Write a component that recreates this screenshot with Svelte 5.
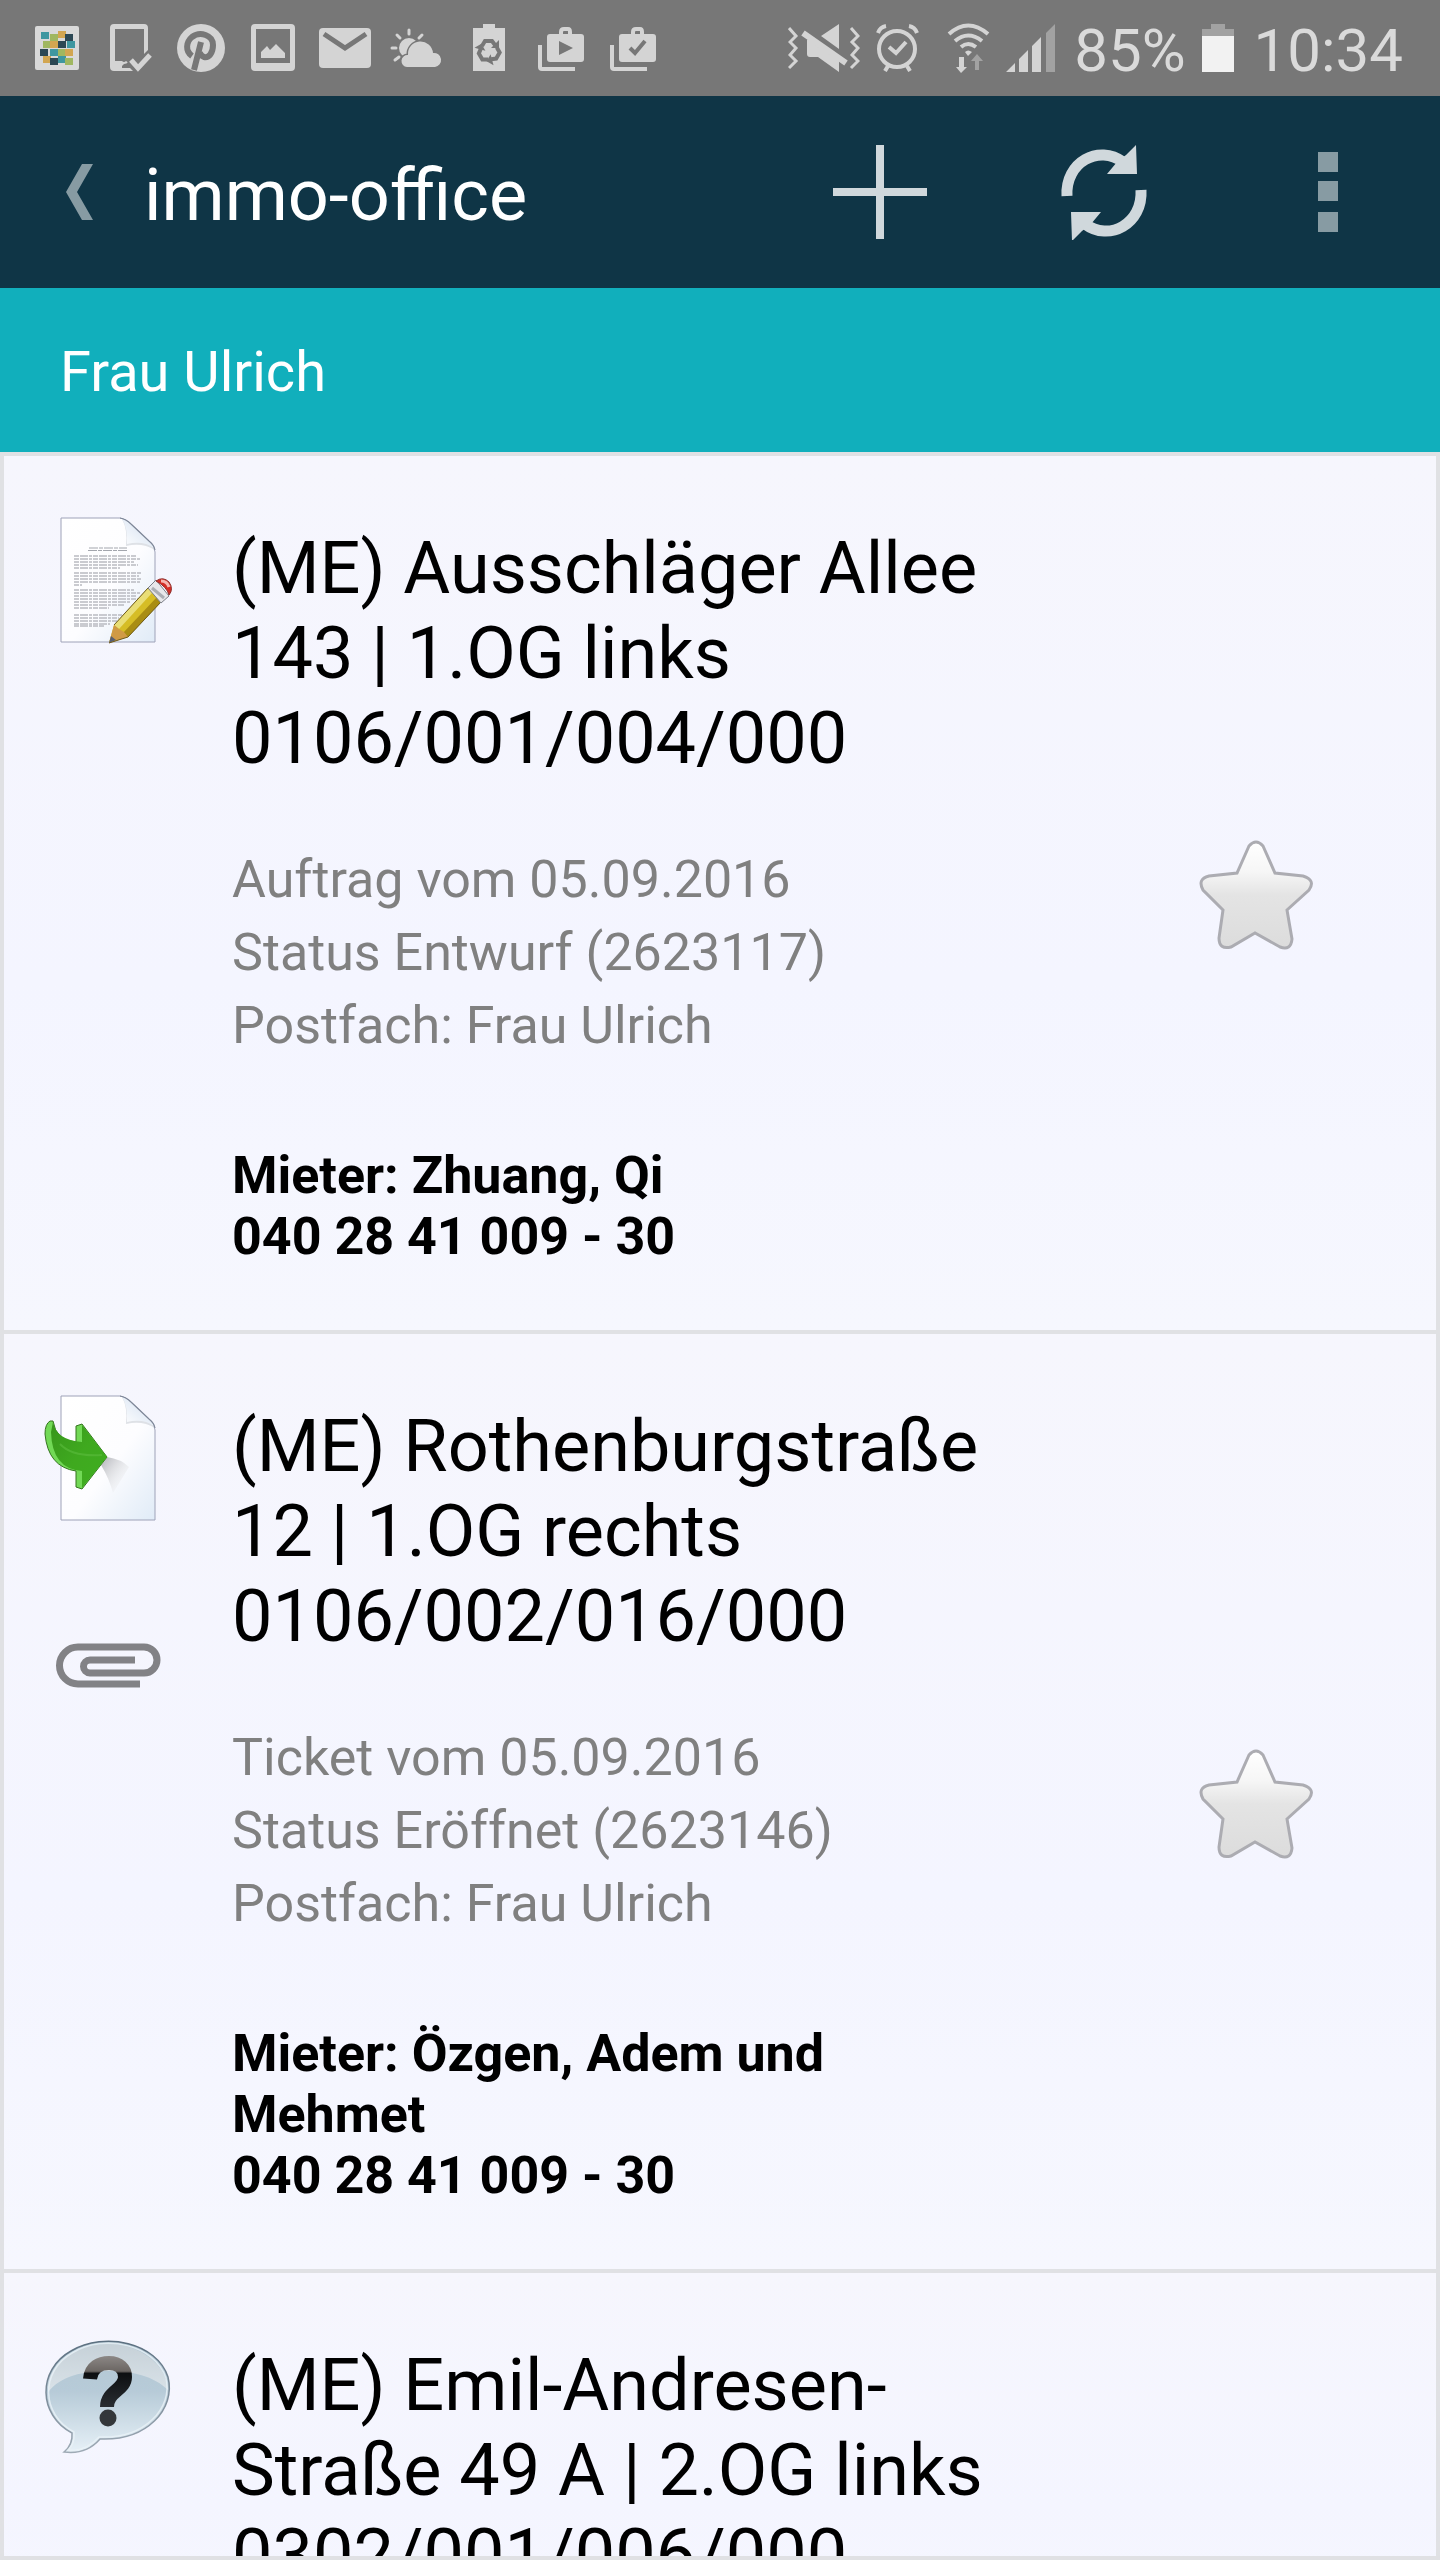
<script>
  let items = $state([
    {
      icon: 'draft', attachment: false, starred: false,
      address: '(ME) Ausschläger Allee 143 | 1.OG links', code: '0106/001/004/000',
      meta: ['Auftrag vom 05.09.2016', 'Status Entwurf (2623117)', 'Postfach: Frau Ulrich'],
      tenant: 'Mieter: Zhuang, Qi', phone: '040 28 41 009 - 30'
    },
    {
      icon: 'incoming', attachment: true, starred: false,
      address: '(ME) Rothenburgstraße 12 | 1.OG rechts', code: '0106/002/016/000',
      meta: ['Ticket vom 05.09.2016', 'Status Eröffnet (2623146)', 'Postfach: Frau Ulrich'],
      tenant: 'Mieter: Özgen, Adem und Mehmet', phone: '040 28 41 009 - 30'
    },
    {
      icon: 'question', attachment: false, starred: false,
      address: '(ME) Emil-Andresen-Straße 49 A | 2.OG links', code: '0302/001/006/000',
      meta: [], tenant: '', phone: ''
    }
  ]);

  const tiles = [
    [20, 8, '#3f97a0'], [29, 10, '#a0b760'], [37, 7, '#d2a651'], [44, 10, '#2c4854'],
    [22, 17, '#a0b760'], [29, 17, '#d2a651'], [37, 17, '#2c4854'], [46, 17, '#3f97a0'],
    [19, 25, '#2c4854'], [29, 25, '#3f97a0'], [37, 25, '#a0b760'], [44, 25, '#d2a651'],
    [22, 32, '#d2a651'], [29, 34, '#2c4854'], [37, 32, '#3f97a0'], [44, 34, '#a0b760']
  ];

  const lines = [
    [30, 40, 62], [30, 43, 66], [30, 46, 60], [30, 49, 64], [30, 52, 46],
    [30, 57, 67], [30, 60, 65], [30, 63, 67], [30, 66, 66], [30, 69, 8],
    [30, 74, 60], [30, 77, 66], [30, 80, 63], [30, 83, 67], [30, 86, 56], [30, 89, 50], [30, 92, 35],
    [30, 99, 48], [30, 102, 45], [30, 105, 43], [30, 108, 36], [30, 110, 30]
  ];
</script>

{#snippet sheet()}
  <path d="M17 2H76Q82 3 87 8L105 25Q111 30 111 36V126H17Z" fill="url(#paper)" stroke="#9ea2b8" stroke-width="1" />
  <path d="M78 3Q84 14 82 30Q98 26 111 34Q110 29 105 25L87 8Q83 4 78 3Z" fill="#c9ced6" opacity=".6" />
  <path d="M78 3Q84 12 83 28Q99 24 110 32Q109 29 105 25L87 8Q83 4 78 3Z" fill="url(#fold)" />
  <path d="M76 2Q82 3 87 8L105 25Q110 29 111 34" fill="none" stroke="#7e8798" stroke-width="1.2" />
{/snippet}

<svg class="defs" aria-hidden="true">
  <defs>
    <linearGradient id="paper" x1="0" y1="0" x2="1" y2="1">
      <stop offset="0" stop-color="#fff" /><stop offset=".55" stop-color="#fdfdff" /><stop offset="1" stop-color="#e0ebf7" />
    </linearGradient>
    <linearGradient id="fold" x1="0" y1="1" x2="1" y2="0">
      <stop offset="0" stop-color="#fff" /><stop offset=".6" stop-color="#e3ebf6" /><stop offset="1" stop-color="#cdd9e8" />
    </linearGradient>
    <linearGradient id="arrow" x1="0" y1="0" x2="1" y2="1">
      <stop offset="0" stop-color="#37961b" /><stop offset=".5" stop-color="#3fa91f" /><stop offset="1" stop-color="#3fae20" />
    </linearGradient>
    <linearGradient id="shade" x1="0" y1="0" x2="1" y2="1">
      <stop offset="0" stop-color="#aeb0b6" /><stop offset="1" stop-color="#fff" stop-opacity="0" />
    </linearGradient>
    <linearGradient id="bubble" x1="0" y1="0" x2="0" y2="1">
      <stop offset="0" stop-color="#b3c7d3" /><stop offset=".45" stop-color="#b7cbd8" /><stop offset="1" stop-color="#e6f0f7" />
    </linearGradient>
    <linearGradient id="gloss" x1="0" y1="0" x2="0" y2="1">
      <stop offset="0" stop-color="#c6d1d8" /><stop offset="1" stop-color="#d9e2e8" />
    </linearGradient>
    <linearGradient id="rim" x1="0" y1="0" x2="0" y2="1">
      <stop offset="0" stop-color="#5c7080" /><stop offset="1" stop-color="#9eaab5" />
    </linearGradient>
    <linearGradient id="mark" gradientUnits="userSpaceOnUse" x1="0" y1="22" x2="0" y2="76">
      <stop offset="0" stop-color="#8e8a88" /><stop offset=".3" stop-color="#6b6663" />
      <stop offset=".34" stop-color="#0d0f11" /><stop offset="1" stop-color="#2b2f33" />
    </linearGradient>
    <linearGradient id="star" x1="0" y1="0" x2="0" y2="1">
      <stop offset="0" stop-color="#fff" /><stop offset=".28" stop-color="#f6f6f6" />
      <stop offset=".5" stop-color="#e4e4e4" /><stop offset="1" stop-color="#dcdcdc" />
    </linearGradient>
  </defs>
</svg>

<div class="app">
  <div class="status">
    <div class="notes">
      <svg viewBox="0 0 72 48"><rect x="14" y="2" width="44" height="44" rx="2" fill="#d9d9d9" />
        {#each tiles as [x, y, c]}<rect {x} {y} width="8" height="7" fill={c} />{/each}
      </svg>
      <svg viewBox="0 0 72 48">
        <path d="M21 0H51a4 4 0 0 1 4 4V26L51 30V5H22V37H29Q31 39 33 37Q37 39 31 40L29 42V44H37L40 47H21a4 4 0 0 1-4-4V4a4 4 0 0 1 4-4Z" />
        <path class="line" d="M38 36L45 44L57 31" stroke-width="5" />
      </svg>
      <svg viewBox="0 0 72 48"><circle cx="36" cy="24" r="24" />
        <path class="cut" d="M27 32C20 27 21 18 27 13C35 7 48 11 48 21C48 29 44 34 39 33Q34 31 35 27M36 18L29 46" stroke-width="6" />
      </svg>
      <svg viewBox="0 0 72 48"><path fill-rule="evenodd" d="M18 0H54a4 4 0 0 1 4 4V43a4 4 0 0 1-4 4H18a4 4 0 0 1-4-4V4a4 4 0 0 1 4-4ZM19 5V39H53V5Z" />
        <path d="M24 34V28L30 22L33 26L39 20L48 29V34Z" />
      </svg>
      <svg viewBox="0 0 72 48"><rect x="10" y="4" width="52" height="40" rx="4" />
        <path class="cut" d="M15 10L36 24L57 10" stroke-width="5" />
      </svg>
      <svg viewBox="0 0 72 48"><circle cx="28" cy="24" r="10" />
        <path class="line" d="M28 6V10M16 11L19 14M11 24H15M14 36L18 33M41 11L38 14" stroke-width="3" stroke-linecap="round" />
        <path class="outline" d="M26 43a6 6 0 0 1 1-12a12 12 0 0 1 25-2a7 7 0 0 1 2 14Z" />
      </svg>
      <svg viewBox="0 0 72 48"><path d="M20 4H30V0H42V4H52V47H20Z" />
        <g class="cut" stroke-width="4">
          {#each [0, 120, 240] as angle}
            <g transform="rotate({angle} 36 27)"><path d="M29 22L32 17H39L42 21" /><path class="tip" d="M38 24L46 24L46 16Z" /></g>
          {/each}
        </g>
      </svg>
      <svg viewBox="0 0 72 48"><rect x="22" y="10" width="37" height="28" rx="3" />
        <path class="line" d="M36 11V8Q36 5 39 5H43Q45 5 45 8V11M15 21V43Q15 45 17 45H50" stroke-width="4" />
        <path class="hole" d="M34 17L48 24L34 31Z" />
      </svg>
      <svg viewBox="0 0 72 48"><rect x="22" y="10" width="37" height="28" rx="3" />
        <path class="line" d="M36 11V8Q36 5 39 5H43Q45 5 45 8V11M15 21V43Q15 45 17 45H50" stroke-width="4" />
        <path class="cut" d="M33 24L38 29L48 17" stroke-width="4" />
      </svg>
    </div>
    <div class="system">
      <svg class="mute" viewBox="0 0 72 48">
        <path class="line" d="M1 4L8 12L2 18L8 24L2 31L8 37L1 44M63 4L70 12L64 18L70 24L64 31L70 37L63 44" stroke-width="3" />
        <path d="M33 12L51 0V25ZM19 16L22 14L51 36V48L30 33H22Q19 33 19 30Z" />
        <path class="line" d="M15 9L58 39" stroke-width="6" />
      </svg>
      <svg class="alarm" viewBox="0 0 55 48"><ellipse class="line" cx="21" cy="25" rx="18" ry="18" stroke-width="4" />
        <path class="line" d="M13 23L20 29L30 18M2 9Q4 3 10 2M41 9Q39 3 33 2M12 42L9 47M31 42L34 47" stroke-width="4" />
      </svg>
      <svg class="wifi" viewBox="0 0 43 48">
        <path class="line" d="M2 10Q21 -7 41 10M8 17Q21 6 35 17M14 23Q21 17 29 23" stroke-width="4" />
        <path d="M18 28Q21 25 25 28L21 32ZM12 33H17V43H20L14 49L9 43H12Z" />
        <path class="dim" d="M28 46H32V37H36L30 30L24 37H28Z" />
      </svg>
      <svg class="signal" viewBox="0 0 52 48"><path d="M0 48L9 39V48ZM13 48V35L22 26V48ZM26 48V22L35 13V48Z" /><path class="dim" d="M40 48V9L49 0V48Z" /></svg>
      <span>85%</span>
      <svg class="battery" viewBox="0 0 36 48"><path class="dim" d="M9 0H23V5H32V12H0V5H9Z" /><rect class="charge" y="12" width="32" height="36" /></svg>
      <span>10:34</span>
    </div>
  </div>

  <header>
    <button class="back" aria-label="Zurück"><svg viewBox="0 0 28 56"><path d="M16 0H27L11 28L27 56H16L0 28Z" fill="#879ba3" /></svg></button>
    <h1>immo-office</h1>
    <button class="action" aria-label="Neu"><svg viewBox="0 0 96 96"><path d="M44 1H52V44H95V52H52V95H44V52H1V44H44Z" fill="#d0d8dc" /></svg></button>
    <button class="action" aria-label="Aktualisieren">
      <svg viewBox="0 0 96 96">
        {#each [0, 180] as angle}
          <g transform="rotate({angle} 48 49)">
            <path d="M11 52C9 18 43 0 67 18" fill="none" stroke="#d0d8dc" stroke-width="11" />
            <path d="M80 1L81 30H51L61 18L70 11Z" fill="#d0d8dc" />
          </g>
        {/each}
      </svg>
    </button>
    <button class="action" aria-label="Mehr"><svg viewBox="0 0 96 96"><path d="M38 8H58V28H38ZM38 37H58V57H38ZM38 68H58V88H38Z" fill="#879ba3" /></svg></button>
  </header>

  <div class="mailbox">Frau Ulrich</div>

  <ul>
    {#each items as item}
      <li>
        <div class="icons">
          <svg viewBox="0 0 128 128" aria-hidden="true">
            {#if item.icon === 'draft'}
              {@render sheet()}
              <path d="M45 32H83M44 34.5H84" stroke="#a3a6ad" stroke-width="1" stroke-dasharray="9 1 4 1" />
              {#each lines as [x, y, w]}
                <path d="M{x} {y}h{w}" stroke="#b9bbc1" stroke-width="1.4" stroke-dasharray="5 1 8 1 3 1" />
              {/each}
              <path d="M65 127L70 109L104 72L117 86L84 121Z" fill="#d6bd25" />
              <path d="M70 109L104 72L108 77L75 113Z" fill="#e9de77" />
              <path d="M79 117L113 81L117 86L84 121Z" fill="#a98d13" />
              <path d="M65 127L70 109L75 113L80 116L84 121Z" fill="#d09a45" />
              <path d="M65 127L67 120L72 124Z" fill="#596072" />
              <path d="M70 109L104 72M65 127L84 121L117 86" fill="none" stroke="#6d5a1c" stroke-width="1" />
              <path d="M104 72L112 64L125 80L117 87Z" fill="#e7e7ea" stroke="#7c7f87" stroke-width="1" />
              <path d="M108 72L120 82" stroke="#abaeb4" stroke-width="3" />
              <path d="M112 65Q119 60 125 66Q130 73 125 79Q123 71 112 65Z" fill="#d62d25" stroke="#8e3330" stroke-width="1" />
              <path d="M117 65Q123 65 125 71" fill="none" stroke="#f6b6b0" stroke-width="3" />
            {:else if item.icon === 'incoming'}
              {@render sheet()}
              <path d="M63 63Q77 65 85 73L69 99Q65 84 57 71Z" fill="url(#shade)" />
              <path d="M6 27Q1 30 1 40Q4 73 32 77V93L38 95L63 63L38 30L32 32V48Q12 47 9 27Z" fill="#72d956" stroke="#34751f" stroke-width="1" />
              <path d="M9 28Q12 46 38 48V31L63 63L38 94V77Q8 75 7 38Z" fill="url(#arrow)" />
              <path d="M16 50Q28 63 58 61" fill="none" stroke="#5cbc3d" stroke-width="2" opacity=".6" />
            {:else}
              <path d="M28 100C-6 82-7 37 27 18C61-2 113 10 124 44C132 76 103 108 56 106Q42 122 20 119Q29 112 28 100Z" fill="url(#bubble)" stroke="url(#rim)" stroke-width="1.5" />
              <path d="M4 59C2 31 32 11 65 11C96 11 123 32 124 57C110 43 88 38 64 38C39 38 17 43 4 59Z" fill="url(#gloss)" />
              <path d="M30 99C-3 82-4 38 28 20C61 0 111 12 122 45C129 75 101 106 55 104Q42 119 24 117Q31 111 30 99Z" fill="none" stroke="#eaf2f7" stroke-width="1.5" opacity=".8" />
              <path d="M46 46C47 34 56 30 65 30C75 30 81 36 81 44C81 57 63 58 63 74" fill="none" stroke="url(#mark)" stroke-width="14" />
              <circle cx="64" cy="85" r="8.5" fill="#33373a" />
            {/if}
          </svg>
          {#if item.attachment}
            <svg viewBox="0 0 128 128" role="img" aria-label="Anhang">
              <path d="M96 82H34A18.5 18.5 0 0 1 34 45H100A13 13 0 0 1 100 71H46A6.5 6.5 0 0 1 46 58H91" fill="none" stroke="#828286" stroke-width="7" />
            </svg>
          {/if}
        </div>
        <div class="body">
          <h2>{item.address}<br />{item.code}</h2>
          {#if item.meta.length}
            <p class="meta">{#each item.meta as line}<span>{line}</span>{/each}</p>
            <p class="tenant"><span>{item.tenant}</span><span>{item.phone}</span></p>
          {/if}
        </div>
        {#if item.meta.length}
          <button class="star" aria-label="Favorit" aria-pressed={item.starred} onclick={() => (item.starred = !item.starred)}>
            <svg viewBox="0 0 112 112">
              <path d="M49 7Q56-1 63 7L75 34L103 37Q116 41 109 51L87 71L92 100Q91 112 80 108L55 94L31 108Q19 111 19 99L23 71L3 51Q-3 40 9 37L37 34Z" fill={item.starred ? '#f5c93d' : 'url(#star)'} stroke="#acacb2" stroke-width="3" />
            </svg>
          </button>
        {/if}
      </li>
    {/each}
  </ul>
</div>

<style>
  :global(body) { margin: 0; }
  .defs { position: absolute; width: 0; height: 0; }
  .app {
    display: flex; flex-direction: column; height: 100vh;
    font-family: Roboto, sans-serif; color: #000; background: #f5f6fe;
  }
  svg { display: block; flex: none; }
  button { display: flex; align-items: center; justify-content: center; padding: 0; border: 0; background: none; cursor: pointer; }
  h1, h2, p, ul { margin: 0; padding: 0; font-weight: 400; }

  .status {
    display: flex; flex: none; justify-content: space-between; align-items: center;
    height: 96px; padding: 0 37px 0 21px; box-sizing: border-box; background: #777; color: #dadada;
  }
  .notes, .system { display: flex; align-items: center; }
  .system { gap: 16px; }
  .status svg { width: 72px; height: 48px; fill: #d4d4d4; }
  .status .alarm { width: 55px; }
  .status .wifi { width: 43px; overflow: visible; }
  .status .signal { width: 52px; }
  .status .battery { width: 36px; }
  .status span { padding-top: 5px; font-size: 60px; line-height: 72px; }
  .line { fill: none; stroke: #d4d4d4; }
  .cut { fill: none; stroke: #777; }
  .hole { fill: #777; }
  .tip { fill: #777; stroke: none; }
  .outline { stroke: #777; stroke-width: 3; paint-order: stroke; }
  .dim { fill: #a2a2a2; }
  .charge { fill: #f2f2f2; }

  header { display: flex; flex: none; align-items: stretch; height: 192px; background: #0f3546; }
  .back { width: 144px; padding-left: 16px; }
  .back svg { width: 28px; height: 56px; }
  h1 { flex: 1; padding-top: 4px; font-size: 72px; line-height: 188px; color: #fff; }
  header h1 { padding-top: 6px; }
  .action { width: 224px; }
  .action svg { width: 96px; height: 96px; }

  .mailbox { flex: none; padding: 4px 60px 0; font-size: 56px; line-height: 160px; color: #fff; background: #11afbc; }

  ul { flex: 1; min-height: 0; overflow: hidden; list-style: none; border: 4px solid #e0e1e4; }
  li {
    display: grid; grid-template-columns: 228px minmax(0, 1fr) 424px;
    border-bottom: 4px solid #e0e1e4;
    background: linear-gradient(#f6f6fd, #f4f5ff 60%, #f6f7fe);
  }
  .icons { display: flex; flex-direction: column; gap: 80px; padding: 60px 0 0 40px; }
  .icons svg { width: 128px; height: 128px; }
  .body { padding: 70px 0 63px; }
  h2 { font-size: 72px; line-height: 85px; }
  p span { display: block; }
  .meta { margin-top: 62px; font-size: 52px; line-height: 73px; color: #808080; }
  .tenant { margin-top: 83px; font-size: 52px; line-height: 61px; font-weight: 700; }
  .star { align-self: center; justify-self: center; margin: 4px 0 0 64px; }
  .star svg { width: 112px; height: 112px; overflow: visible; }
</style>
